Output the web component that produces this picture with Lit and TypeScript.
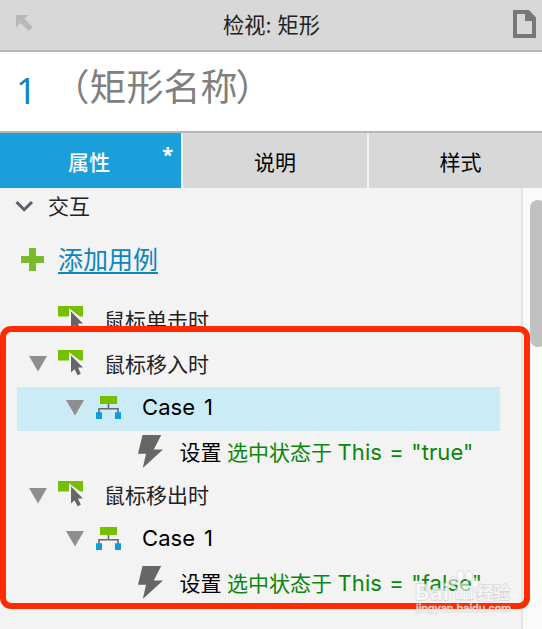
import { LitElement, html, css, svg, nothing } from "lit";
import { customElement, property } from "lit/decorators.js";

type Kind = "event" | "case" | "action";
interface Row {
  kind: Kind;
  label: string;
  detail?: string;
  value?: string;
  open?: boolean;
  selected?: boolean;
}

const ROWS: Row[] = [
  { kind: "event", label: "鼠标单击时" },
  { kind: "event", label: "鼠标移入时", open: true },
  { kind: "case", label: "Case 1", open: true, selected: true },
  { kind: "action", label: "设置", detail: "选中状态于", value: 'This = "true"' },
  { kind: "event", label: "鼠标移出时", open: true },
  { kind: "case", label: "Case 1", open: true },
  { kind: "action", label: "设置", detail: "选中状态于", value: 'This = "false"' },
];

const ICONS = {
  event: svg`<svg width="26" height="26" viewBox="0 0 26 26">
    <path fill="#76bf00" d="M0 0H25V10.5H22L11 2.2V10.5H0Z"/>
    <path fill="#666" d="M13 5.5V22.5L16.6 19.2L19.5 25.2L22.8 23.8L20 17.6H25Z"/></svg>`,
  case: svg`<svg width="26" height="24" viewBox="0 0 26 24">
    <path fill="none" stroke="#666" stroke-width="1.6" d="M12.5 8V12.7M3 17V12.7H22V17"/>
    <path fill="#76bf00" d="M4 0H21V8H4Z"/>
    <path fill="#0d9ddb" d="M0 16.3H6V23H0ZM19 16.3H25V23H19Z"/></svg>`,
  action: svg`<svg width="26" height="34" viewBox="0 0 26 34">
    <path fill="#666" d="M4.5 0H23.2L15.8 14.5H25L4.8 33L8 18.8H0Z"/></svg>`,
};

@customElement("tree-row")
class TreeRow extends LitElement {
  @property({ attribute: false }) row!: Row;

  static styles = css`
    :host { display: block; height: 43.8px; }
    .row {
      box-sizing: border-box; height: 100%; width: 483.5px; margin-left: 16.5px;
      display: flex; align-items: flex-start; font-size: 21px; line-height: 43.8px;
      color: #222; white-space: pre;
    }
    .selected { background: #cbebf7; }
    .event { padding-left: 12px; }
    .case { padding-left: 49.5px; color: #000; }
    .action { padding-left: 121.5px; color: #000; }
    .toggle { width: 18px; height: 16px; flex: none; margin-top: 13px; }
    .toggle svg { display: block; }
    .icon { flex: none; }
    .icon svg { display: block; }
    .event .icon { width: 46px; margin: 6.5px 0 0 11.5px; }
    .event .label { margin-top: -0.5px; }
    .case .icon { width: 46px; margin: 9px 0 0 12px; }
    .action .icon { width: 41.5px; margin-top: 4px; }
    .case .label { font-size: 22px; letter-spacing: 0.1px; margin-top: -1.5px; word-spacing: 2.5px; }
    .detail { color: #0a860a; margin-left: 5.5px; }
    .value { color: #0a860a; margin-left: 5.5px; font-size: 22px; letter-spacing: 0.1px; word-spacing: 1px; }
  `;

  render() {
    const r = this.row;
    return html`<div class="row ${r.kind} ${r.selected ? "selected" : ""}"
      >${r.kind === "action" ? nothing : html`<span class="toggle">${r.open
        ? svg`<svg width="18" height="16"><path fill="#8e8e8e" d="M0 0H18L9 15.5Z"/></svg>` : nothing}</span>`}<span
        class="icon">${ICONS[r.kind]}</span><span class="label">${r.label}</span>${r.detail
        ? html`<span class="detail">${r.detail}</span><span class="value">${r.value}</span>` : nothing}</div>`;
  }
}

@customElement("app-root")
class AppRoot extends LitElement {
  static styles = css`
    :host {
      display: flex; flex-direction: column; position: relative; width: 542px; height: 629px;
      overflow: hidden; background: #f3f3f3; color: #222;
      font-family: Inter, "Noto Sans CJK SC", sans-serif;
    }
    svg { display: block; flex: none; }
    .title {
      box-sizing: border-box; height: 52px; flex: none; background: #d8d8d8; border-bottom: 2px solid #b7b7b7;
      display: grid; grid-template-columns: 40px 1fr 40px; align-items: center;
      font-size: 21.2px; text-align: center;
    }
    .caption { margin-top: -3px; padding-left: 1px; }
    .back { margin: -3px 0 0 16px; }
    .page { margin: -2px 0 0 11px; }
    .name {
      box-sizing: border-box; height: 81px; flex: none; background: #fff; border-bottom: 2px solid #b7b7b7;
      display: flex; align-items: center; white-space: nowrap;
    }
    .number { width: 36.5px; padding-left: 16px; margin-top: -2px; font-family: "Noto Sans", sans-serif; font-size: 36px; color: #0b87bd; }
    .placeholder { font-size: 37px; line-height: 50px; color: #808080; margin-top: -8px; }
    .close { margin-left: -2px; }
    .tabs {
      height: 54.5px; flex: none; display: grid; grid-template-columns: 181px 184px 1fr;
      grid-template-rows: 54.5px; column-gap: 2px;
      font-size: 21px; line-height: 59px; text-align: center; color: #000; overflow: hidden;
    }
    .tab { background: #d8d8d8; }
    .last { padding-left: 10px; }
    .active { background: #1b9fdb; color: #fff; font-weight: 500; position: relative; padding-right: 3px; }
    .star { position: absolute; right: 8px; top: -7px; font: bold 20px/58px "Noto Sans", sans-serif; }
    .body { flex: 1; min-height: 0; display: flex; }
    .pane { width: 521px; flex: none; border-right: 2px solid #e5e5e5; }
    .section { height: 39px; display: flex; align-items: center; font-size: 21px; }
    .section svg { margin: -2px 14px 0 15px; }
    .heading { margin-top: -5px; }
    .add { height: 66px; display: flex; align-items: center; }
    .add svg { margin: 0 14px 0 21px; }
    .link {
      font-size: 25px; line-height: 28px; color: #0b87bd; border-bottom: 2px solid #0b87bd; height: 26px;
    }
    .tree { margin-top: 7px; }
    .track { flex: 1; background: #fafafa; padding: 12.5px 0 0 7px; overflow: hidden; }
    .thumb { width: 16px; height: 147px; border-radius: 8px; background: #c1c1c1; }
    .frame {
      position: absolute; left: -0.5px; top: 326.3px; width: 530px; height: 283px; box-sizing: border-box;
      border: 6px solid #ff2a00; border-radius: 11px;
    }
    .mark { position: absolute; left: 415px; top: 569px; width: 100px; height: 50px; color: rgba(255,255,255,.7); }
    .wm { paint-order: stroke; stroke: rgba(190,190,190,.55); stroke-width: 1.4px; fill: rgba(255,255,255,.72); font-weight: 700; }
    .url { font-weight: 500; stroke-width: 1px; }
  `;

  render() {
    return html`
      <div class="title">
        <svg class="back" width="17" height="17" viewBox="0 0 17 17"><path fill="#b8b8b8" d="M0 0H12.5L8.5 4L16.5 12L13 16L4.5 8L0 12.5Z"/></svg>
        <span class="caption">检视: 矩形</span>
        <svg class="page" width="23" height="28" viewBox="0 0 23 28"><path fill="#777" fill-rule="evenodd" d="M0 0H16L23 7.5V28H0ZM4 4V24H19V11H12V4Z"/></svg>
      </div>
      <div class="name"><span class="number">1</span><span class="placeholder">（矩形名称<span class="close">）</span></span></div>
      <div class="tabs">
        <div class="tab active">属性<span class="star">*</span></div>
        <div class="tab">说明</div>
        <div class="tab last">样式</div>
      </div>
      <div class="body">
        <div class="pane">
          <div class="section">
            <svg width="19" height="13" viewBox="0 0 19 13"><path fill="none" stroke="#5c5f68" stroke-width="3" d="M1.5 2L9.2 9.7L17 2"/></svg>
            <span class="heading">交互</span>
          </div>
          <div class="add">
            <svg width="23" height="23" viewBox="0 0 23 23"><path fill="#79bb2b" d="M8 0H15V8H23V15H15V23H8V15H0V8H8Z"/></svg>
            <span class="link">添加用例</span>
          </div>
          <div class="tree">${ROWS.map((r) => html`<tree-row .row=${r}></tree-row>`)}</div>
        </div>
        <div class="track"><div class="thumb"></div></div>
      </div>
      <div class="frame"></div>
      <svg class="mark" viewBox="0 0 100 50">
        <g fill="currentColor" stroke="#d0d0d0" stroke-width=".8" opacity=".8">
          <ellipse cx="38" cy="12" rx="3.4" ry="5"/><ellipse cx="45.5" cy="6.5" rx="3.5" ry="5"/>
          <ellipse cx="54" cy="7" rx="3.5" ry="5"/><ellipse cx="60" cy="14" rx="3.4" ry="5"/>
          <path d="M49 14C55 14 56 20 60 23C64 30 58 32 49 31C40 32 34 29 39 22C43 19 43 14 49 14Z"/>
        </g>
        <text class="wm" x="0" y="31" font-size="22" textLength="34">Bai</text>
        <text class="wm" x="40" y="30" font-size="13" textLength="18">du</text>
        <text class="wm" x="62" y="30" font-size="17" textLength="33">经验</text>
        <text class="wm url" x="1" y="43" font-size="11" textLength="95">jingyan.baidu.com</text>
      </svg>`;
  }
}
